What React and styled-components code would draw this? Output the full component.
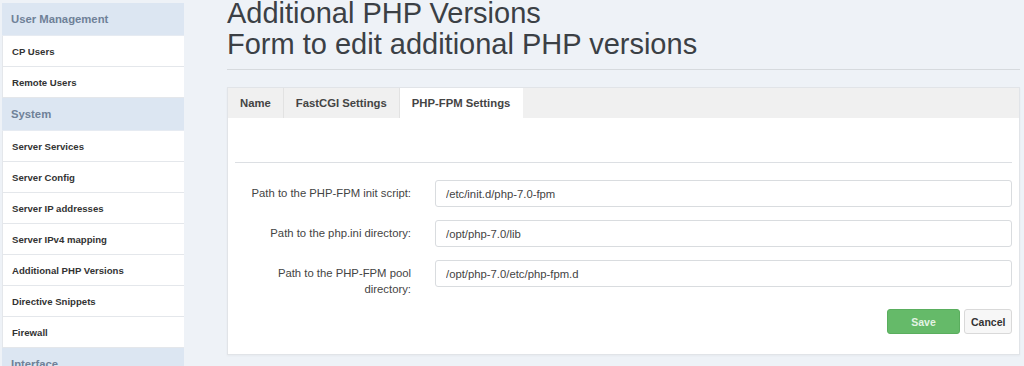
import React from "react";
import styled, { createGlobalStyle } from "styled-components";

const GlobalStyle = createGlobalStyle`
  html, body {
    margin: 0;
    padding: 0;
    background: #eef2f7;
    font-family: "Liberation Sans", Arial, sans-serif;
    color: #333;
  }
  #root {
    height: 366px;
    overflow: hidden;
  }
`;

const Page = styled.div`
  display: flex;
  align-items: flex-start;
  height: 366px;
  overflow: hidden;
`;

const Sidebar = styled.nav`
  width: 182px;
  margin-left: 2px;
  padding-top: 3px;
  display: flex;
  flex-direction: column;
  flex-shrink: 0;
`;

const SectionHead = styled.div`
  height: 33px;
  display: flex;
  align-items: center;
  padding-left: 9px;
  background: #dce6f2;
  color: #6f8198;
  font-size: 11.3px;
  font-weight: bold;
  box-sizing: border-box;
  border-bottom: 1px solid #e6ebf2;
`;

const NavItem = styled.div`
  height: 31px;
  display: flex;
  align-items: center;
  padding-left: 9px;
  background: #fff;
  color: #333;
  font-size: 9.6px;
  font-weight: bold;
  box-sizing: border-box;
  border-bottom: 1px solid #e4e7eb;
  border-left: 1px solid #e4e7eb;
`;

const Main = styled.main`
  flex: 1;
  margin-left: 43px;
  padding-right: 4px;
  min-width: 0;
`;

const Title = styled.h1`
  margin: -2px 0 0;
  font-size: 29px;
  line-height: 31px;
  font-weight: normal;
  color: #3b4045;
`;

const Rule = styled.hr`
  margin: 9px 0 0;
  border: 0;
  border-top: 1px solid #d6dade;
`;

const Panel = styled.section`
  margin-top: 17px;
  background: #fff;
  border: 1px solid #e1e4e8;
  box-shadow: 0 1px 2px rgba(0, 0, 0, 0.04);
`;

const TabBar = styled.div`
  display: flex;
  height: 30px;
  background: #f0f0f0;
`;

const Tab = styled.div`
  display: flex;
  align-items: center;
  padding: 0 12px;
  font-size: 11.3px;
  font-weight: bold;
  color: #444;
  background: ${p => (p.$active ? "#fff" : "transparent")};
  border-right: 1px solid ${p => (p.$active ? "#fff" : "#e2e2e2")};
`;

const Body = styled.div`
  padding: 0 7px 20px;
`;

const Divider = styled.div`
  margin-top: 44px;
  border-top: 1px solid #dcdfe3;
`;

const Form = styled.div`
  margin-top: 17px;
  display: grid;
  grid-template-columns: 176px 1fr;
  column-gap: 24px;
  row-gap: 13px;
  align-items: start;
`;

const Label = styled.label`
  padding-top: 5px;
  text-align: right;
  font-size: 11.3px;
  line-height: 16px;
  color: #444;
`;

const Input = styled.input`
  height: 27px;
  box-sizing: border-box;
  width: 100%;
  padding: 0 10px;
  border: 1px solid #d9dcdf;
  border-radius: 3px;
  background: #fff;
  font-family: inherit;
  font-size: 11.3px;
  color: #444;
  outline: none;
`;

const Actions = styled.div`
  display: flex;
  justify-content: flex-end;
  gap: 4px;
  margin-top: 12px;
`;

const Button = styled.button`
  height: 25px;
  width: ${p => p.$width}px;
  box-sizing: border-box;
  border-radius: 3px;
  font-family: inherit;
  font-size: 10.5px;
  font-weight: bold;
  cursor: pointer;
  border: 1px solid ${p => (p.$primary ? "#5aae5e" : "#d9d9d9")};
  background: ${p => (p.$primary ? "#65ba69" : "#f7f7f7")};
  color: ${p => (p.$primary ? "#e3f3e3" : "#333")};
`;

const menu = [
  { head: "User Management", items: ["CP Users", "Remote Users"] },
  {
    head: "System",
    items: [
      "Server Services",
      "Server Config",
      "Server IP addresses",
      "Server IPv4 mapping",
      "Additional PHP Versions",
      "Directive Snippets",
      "Firewall",
    ],
  },
  { head: "Interface", items: [] },
];

const fields = [
  { label: "Path to the PHP-FPM init script:", value: "/etc/init.d/php-7.0-fpm" },
  { label: "Path to the php.ini directory:", value: "/opt/php-7.0/lib" },
  { label: "Path to the PHP-FPM pool directory:", value: "/opt/php-7.0/etc/php-fpm.d" },
];

const App = () => {
  return (
    <>
      <GlobalStyle />
      <Page>
        <Sidebar>
          {menu.map(group => (
            <React.Fragment key={group.head}>
              <SectionHead>{group.head}</SectionHead>
              {group.items.map(item => (
                <NavItem key={item}>{item}</NavItem>
              ))}
            </React.Fragment>
          ))}
        </Sidebar>
        <Main>
          <Title>
            Additional PHP Versions
            <br />
            Form to edit additional PHP versions
          </Title>
          <Rule />
          <Panel>
            <TabBar>
              <Tab>Name</Tab>
              <Tab>FastCGI Settings</Tab>
              <Tab $active>PHP-FPM Settings</Tab>
            </TabBar>
            <Body>
              <Divider />
              <Form>
                {fields.map(f => (
                  <React.Fragment key={f.label}>
                    <Label>{f.label}</Label>
                    <Input defaultValue={f.value} />
                  </React.Fragment>
                ))}
              </Form>
              <Actions>
                <Button $primary $width={73}>Save</Button>
                <Button $width={48}>Cancel</Button>
              </Actions>
            </Body>
          </Panel>
        </Main>
      </Page>
    </>
  );
};

export default App;
